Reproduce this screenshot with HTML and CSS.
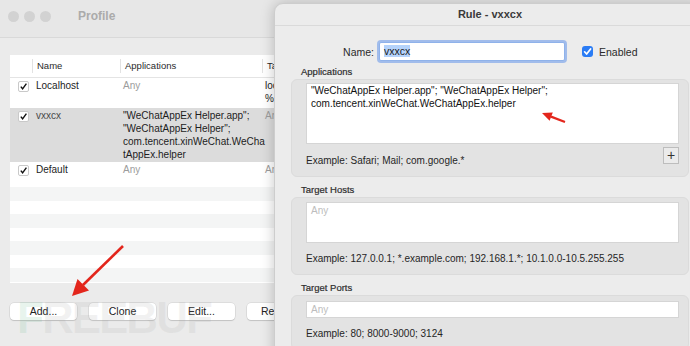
FILE: index.html
```html
<html>
<head>
    <title>Profile - Rule</title>
    <link rel="stylesheet" href="styles.css">
</head>
<body>
    <div class="profile">
        <div class="titlebar">
            <div class="lights"><span></span><span></span><span></span></div>
            <div class="title">Profile</div>
        </div>
        <div class="table">
            <div class="thead">
                <div class="col c1"></div>
                <div class="col c2">Name</div>
                <div class="col c3">Applications</div>
                <div class="col c4">Target Hosts</div>
            </div>
            <div class="row r-local">
                <div class="col c1"><span class="tick"><svg width="9" height="9" viewBox="0 0 9 9"><path d="M1.8 4.6 L3.6 6.8 L7.4 1.6" fill="none" stroke="#111" stroke-width="1.4"/></svg></span></div>
                <div class="col c2">Localhost</div>
                <div class="col c3 muted">Any</div>
                <div class="col c4">localhost;<br>%local%</div>
            </div>
            <div class="row r-sel">
                <div class="col c1"><span class="tick"><svg width="9" height="9" viewBox="0 0 9 9"><path d="M1.8 4.6 L3.6 6.8 L7.4 1.6" fill="none" stroke="#111" stroke-width="1.4"/></svg></span></div>
                <div class="col c2 dim">vxxcx</div>
                <div class="col c3">"WeChatAppEx Helper.app";<br>"WeChatAppEx Helper";<br>com.tencent.xinWeChat.WeCha<br>tAppEx.helper</div>
                <div class="col c4 muted">Any</div>
            </div>
            <div class="row r-def">
                <div class="col c1"><span class="tick"><svg width="9" height="9" viewBox="0 0 9 9"><path d="M1.8 4.6 L3.6 6.8 L7.4 1.6" fill="none" stroke="#111" stroke-width="1.4"/></svg></span></div>
                <div class="col c2">Default</div>
                <div class="col c3 muted">Any</div>
                <div class="col c4 muted">Any</div>
            </div>
            <div class="stripe odd"></div>
            <div class="stripe"></div>
            <div class="stripe odd"></div>
            <div class="stripe"></div>
            <div class="stripe odd"></div>
            <div class="stripe"></div>
            <div class="stripe odd"></div>
        </div>
        <div class="buttons">
            <div class="btn">Add...</div>
            <div class="btn">Clone</div>
            <div class="btn">Edit...</div>
            <div class="btn">Remove</div>
        </div>
    </div>

    <div class="watermark"><span class="wm-f">F</span>REEBUF</div>

    <div class="sheet">
        <div class="sheet-title">Rule - vxxcx</div>
        <div class="name-row">
            <div class="name-label">Name:</div>
            <div class="name-input"><span class="selected">vxxcx</span></div>
            <span class="enabled-box"><svg width="11" height="11" viewBox="0 0 11 11"><path d="M2.6 5.8 L4.6 8 L8.6 3" fill="none" stroke="#fff" stroke-width="1.7" stroke-linecap="round" stroke-linejoin="round"/></svg></span>
            <span class="enabled-label">Enabled</span>
        </div>

        <div class="section-label apps-label">Applications</div>
        <div class="group">
            <div class="field area-apps">"WeChatAppEx Helper.app"; "WeChatAppEx Helper";<br>com.tencent.xinWeChat.WeChatAppEx.helper</div>
            <div class="hint-row">
                <div class="hint">Example: Safari; Mail; com.google.*</div>
                <div class="plus">+</div>
            </div>
        </div>

        <div class="section-label">Target Hosts</div>
        <div class="group">
            <div class="field area-hosts placeholder">Any</div>
            <div class="hint hint-gap">Example: 127.0.0.1; *.example.com; 192.168.1.*; 10.1.0.0-10.5.255.255</div>
        </div>

        <div class="section-label">Target Ports</div>
        <div class="group">
            <div class="field line-ports placeholder">Any</div>
            <div class="hint hint-gap">Example: 80; 8000-9000; 3124</div>
        </div>
    </div>

    <svg class="arrows" width="690" height="346" viewBox="0 0 690 346">
        <line x1="123" y1="246" x2="83" y2="285" stroke="#e3261c" stroke-width="2.6"/>
        <polygon points="72,296 77.5,279 89,290.5" fill="#e3261c"/>
        <line x1="565" y1="122" x2="551" y2="116.6" stroke="#e3261c" stroke-width="2.2"/>
        <polygon points="542,113 552.8,112.4 549.6,120.8" fill="#e3261c"/>
    </svg>
</body>
</html>
```

FILE: styles.css
```css
body {
    margin: 0;
    width: 690px;
    height: 346px;
    overflow: hidden;
    background-color: #ececec;
    font-family: "Liberation Sans", Arial, sans-serif;
    color: #1d1d1d;
}

/* left window */

.profile {
    height: 346px;
    background-color: #ebebeb;
}

.titlebar {
    height: 37px;
    display: flex;
    align-items: center;
    padding-left: 8px;
    border-bottom: 1px solid #d9d9d9;
    background-color: #e7e7e7;
}

.lights {
    display: flex;
    gap: 5px;
    margin-top: -5px;
}

.lights span {
    width: 11px;
    height: 11px;
    border-radius: 50%;
    background-color: #d2d2d2;
}

.title {
    margin-left: 27px;
    margin-top: -5px;
    font-size: 12px;
    font-weight: bold;
    color: #ababab;
}

.table {
    margin: 17px 10px 0 10px;
    height: 228px;
    background-color: #fff;
    overflow: hidden;
}

.thead {
    display: flex;
    height: 22px;
    align-items: center;
    border-bottom: 1px solid #e4e4e4;
    font-size: 9.5px;
    color: #2a2a2a;
}

.thead .col {
    border-left: 1px solid #e2e2e2;
    line-height: 14px;
    padding-left: 4px;
}

.thead .c1 {
    border-left: none;
}

.col {
    box-sizing: border-box;
    flex: none;
}

.c1 { width: 22px; }
.c2 { width: 88px; padding-left: 4px; }
.c3 { width: 142px; padding-left: 3px; }
.c4 { width: 160px; padding-left: 3px; }

.row {
    display: flex;
    font-size: 10px;
    line-height: 13px;
    padding-top: 1px;
    box-sizing: border-box;
}

.r-local { height: 30px; }
.r-sel { height: 54px; background-color: #dcdcdc; }
.r-def { height: 25px; }

.muted {
    color: #9c9c9c;
}

.dim {
    color: #4a4a4a;
}

.tick {
    display: block;
    width: 9px;
    height: 9px;
    margin: 2px 0 0 8px;
    border: 1px solid #c9c9c9;
    border-radius: 2px;
    background-color: #fff;
    box-sizing: content-box;
}

.tick svg {
    display: block;
}

.stripe {
    height: 13.5px;
}

.stripe.odd {
    background-color: #f4f5f5;
}

.buttons {
    display: flex;
    gap: 12px;
    margin: 20px 0 0 10px;
}

.btn {
    width: 67px;
    height: 17px;
    line-height: 17px;
    flex: none;
    text-align: center;
    font-size: 10.5px;
    color: #222;
    background-color: #fff;
    border-radius: 4px;
    box-shadow: 0 0 0 0.5px rgba(0, 0, 0, 0.12), 0 1px 1px rgba(0, 0, 0, 0.12);
}

.watermark {
    position: absolute;
    left: 17px;
    top: 293px;
    font-size: 44px;
    font-weight: bold;
    letter-spacing: -2px;
    line-height: 50px;
    color: rgba(150, 150, 150, 0.12);
    pointer-events: none;
}

.wm-f {
    color: rgba(110, 185, 145, 0.16);
}

/* rule sheet */

.sheet {
    position: absolute;
    left: 274px;
    top: 3px;
    width: 432px;
    height: 380px;
    background-color: #ececec;
    border-radius: 9px 9px 0 0;
    border: 1px solid #cdcdcd;
    box-shadow: 0 0 14px rgba(0, 0, 0, 0.22);
    box-sizing: border-box;
}

.sheet-title {
    height: 21px;
    line-height: 21px;
    text-align: center;
    font-size: 11px;
    font-weight: bold;
    color: #3a3a3a;
    border-bottom: 1px solid #dadada;
}

.name-row {
    display: flex;
    align-items: center;
    margin-top: 16px;
    height: 19px;
    font-size: 10.5px;
}

.name-label {
    width: 99px;
    text-align: right;
    color: #2a2a2a;
}

.name-input {
    width: 186px;
    height: 19px;
    margin-left: 5px;
    box-sizing: border-box;
    background-color: #fff;
    border: 1px solid #8fb2ea;
    box-shadow: 0 0 0 2px rgba(100, 150, 235, 0.55);
    border-radius: 2px;
    padding: 2px 0 0 4px;
    line-height: 13px;
    font-size: 10.5px;
}

.selected {
    background-color: #b5d3fb;
    color: #1a1a1a;
}

.enabled-box {
    width: 11px;
    height: 11px;
    margin-left: 17px;
    border-radius: 3px;
    background-color: #2a7cf5;
}

.enabled-box svg {
    display: block;
}

.enabled-label {
    margin-left: 6px;
    color: #2a2a2a;
}

.section-label {
    margin: 7px 0 1px 26px;
    font-size: 9.5px;
    line-height: 12px;
    color: #2e2e2e;
    -webkit-text-stroke: 0.2px #2e2e2e;
}

.apps-label {
    margin-top: 5px;
}

.group {
    margin: 0 16px;
    padding: 3px 9px 9px 14px;
    background-color: #e3e3e3;
    border: 1px solid #dbdbdb;
    border-radius: 6px;
}

.field {
    box-sizing: border-box;
    background-color: #fff;
    border: 1px solid #d5d5d5;
    font-size: 10px;
    line-height: 13px;
    padding: 0 4px;
}

.area-apps {
    height: 61px;
    color: #111;
}

.area-hosts {
    height: 41px;
    margin-top: 1px;
}

.line-ports {
    height: 17px;
    margin-top: 2px;
}

.placeholder {
    color: #bdbdbd;
    padding-top: 1px;
}

.hint-row {
    display: flex;
    justify-content: space-between;
    align-items: flex-start;
    margin-top: 3px;
}

.hint {
    font-size: 10px;
    line-height: 13px;
    color: #262626;
}

.hint-row .hint {
    margin-top: 7px;
}

.hint-gap {
    margin-top: 9px;
}

.plus {
    width: 16px;
    height: 17px;
    box-sizing: border-box;
    border: 1px solid #bdbdbd;
    background-color: #ebebeb;
    text-align: center;
    font-size: 14px;
    line-height: 14px;
    color: #333;
}

.arrows {
    position: absolute;
    left: 0;
    top: 0;
    pointer-events: none;
}
```
